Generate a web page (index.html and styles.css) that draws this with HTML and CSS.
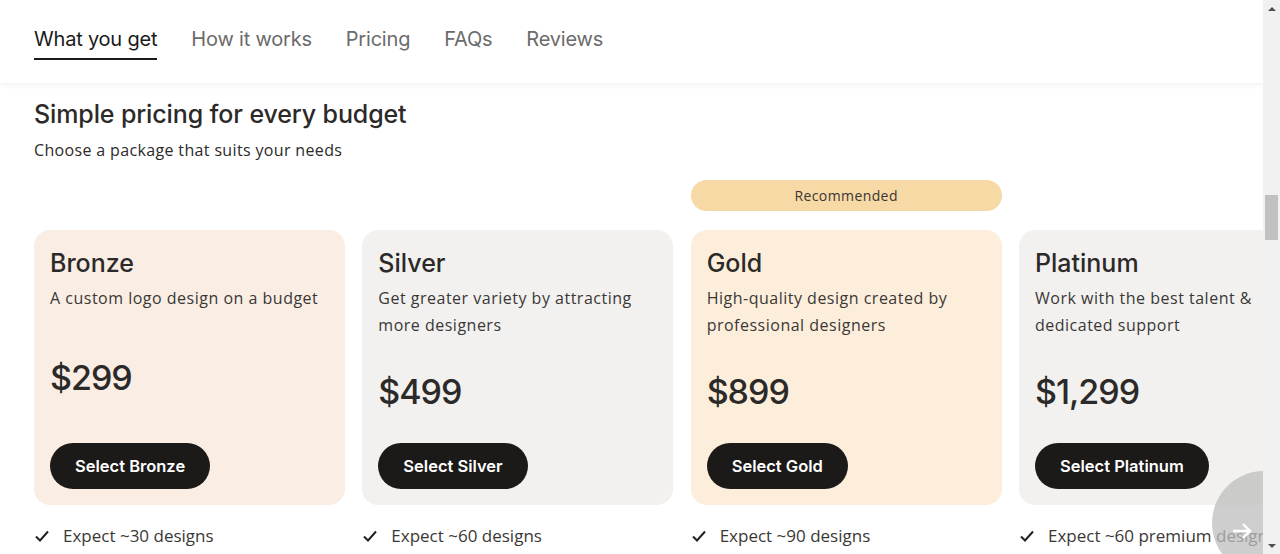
FILE: index.html
```html
<!DOCTYPE html>
<html lang="en">
<head>
<meta charset="utf-8">
<title>Pricing</title>
<link rel="stylesheet" href="styles.css">
</head>
<body>
<div class="page">
  <div class="main">
    <nav class="tabs">
      <a class="tab active">What you get</a>
      <a class="tab">How it works</a>
      <a class="tab">Pricing</a>
      <a class="tab">FAQs</a>
      <a class="tab">Reviews</a>
    </nav>
    <section class="pricing">
      <h2 class="title">Simple pricing for every budget</h2>
      <p class="subtitle">Choose a package that suits your needs</p>
      <div class="plans">
        <div class="plan">
          <div class="badge-slot"></div>
          <div class="card bronze">
            <h3 class="plan-name">Bronze</h3>
            <p class="plan-desc">A custom logo design on a budget</p>
            <div class="price-box"><span class="price">$299</span></div>
            <button class="select">Select Bronze</button>
          </div>
          <ul class="features"><li><svg class="check" viewBox="0 0 16 16"><path d="M2 8.5l4 4 8-9" fill="none" stroke="#222" stroke-width="2"/></svg>Expect ~30 designs</li></ul>
        </div>
        <div class="plan">
          <div class="badge-slot"></div>
          <div class="card silver">
            <h3 class="plan-name">Silver</h3>
            <p class="plan-desc">Get greater variety by attracting more designers</p>
            <div class="price-box"><span class="price">$499</span></div>
            <button class="select">Select Silver</button>
          </div>
          <ul class="features"><li><svg class="check" viewBox="0 0 16 16"><path d="M2 8.5l4 4 8-9" fill="none" stroke="#222" stroke-width="2"/></svg>Expect ~60 designs</li></ul>
        </div>
        <div class="plan">
          <div class="badge-slot"><span class="badge">Recommended</span></div>
          <div class="card gold">
            <h3 class="plan-name">Gold</h3>
            <p class="plan-desc">High-quality design created by professional designers</p>
            <div class="price-box"><span class="price">$899</span></div>
            <button class="select">Select Gold</button>
          </div>
          <ul class="features"><li><svg class="check" viewBox="0 0 16 16"><path d="M2 8.5l4 4 8-9" fill="none" stroke="#222" stroke-width="2"/></svg>Expect ~90 designs</li></ul>
        </div>
        <div class="plan">
          <div class="badge-slot"></div>
          <div class="card silver">
            <h3 class="plan-name">Platinum</h3>
            <p class="plan-desc">Work with the best talent &amp; dedicated support</p>
            <div class="price-box"><span class="price">$1,299</span></div>
            <button class="select">Select Platinum</button>
          </div>
          <ul class="features"><li><svg class="check" viewBox="0 0 16 16"><path d="M2 8.5l4 4 8-9" fill="none" stroke="#222" stroke-width="2"/></svg>Expect ~60 premium designs</li></ul>
        </div>
      </div>
      <button class="next" aria-label="Next"><svg viewBox="0 0 24 24"><path d="M3 12h17M13 5l7 7-7 7" fill="none" stroke="#fff" stroke-width="2.4"/></svg></button>
    </section>
  </div>
  <div class="scrollbar">
    <div class="sb-arrow up"></div>
    <div class="sb-track"><div class="sb-thumb"></div></div>
    <div class="sb-arrow down"></div>
  </div>
</div>
</body>
</html>
```
FILE: styles.css
```css
* { box-sizing: border-box; }
html, body { margin: 0; padding: 0; }
body {
  font-family: "Open Sans", "Noto Sans", sans-serif;
  color: #2b2a29;
  background: #fff;
  overflow: hidden;
}
.page {
  display: flex;
  width: 1280px;
  height: 554px;
}
.main {
  width: 1263px;
  height: 554px;
  overflow: hidden;
  position: relative;
}
.tabs {
  height: 83px;
  display: flex;
  gap: 34px;
  padding: 27px 0 0 34px;
  background: #fff;
  box-shadow: 0 2px 6px rgba(0,0,0,0.06);
  position: relative;
  z-index: 1;
}
.tab {
  font-family: Inter, "Liberation Sans", sans-serif;
  font-size: 20px;
  line-height: 24px;
  letter-spacing: -0.2px;
  color: #6b6b6b;
  height: 33px;
  padding-bottom: 7px;
}
.tab.active {
  color: #1a1a1a;
  border-bottom: 2px solid #1a1a1a;
}
.pricing {
  padding: 14px 0 0 34px;
  position: relative;
  height: 471px;
}
.title {
  margin: 0;
  font-family: Inter, "Open Sans", sans-serif;
  font-size: 25px;
  line-height: 34px;
  font-weight: 500;
  letter-spacing: -0.12px;
  color: #2b2a29;
}
.subtitle {
  margin: 7px 0 0;
  font-size: 16px;
  line-height: 24px;
  letter-spacing: 0.35px;
  color: #2b2a29;
}
.plans {
  display: flex;
  gap: 17.33px;
  margin-top: 18px;
}
.plan {
  flex: 0 0 311px;
  display: flex;
  flex-direction: column;
}
.badge-slot {
  height: 31px;
  margin-bottom: 19px;
}
.badge {
  display: block;
  height: 31px;
  line-height: 31px;
  border-radius: 16px;
  background: #f7d9a6;
  text-align: center;
  font-size: 14px;
  letter-spacing: 0.4px;
  color: #3a3633;
}
.card {
  height: 275px;
  border-radius: 16px;
  padding: 16px 12px 16px 16px;
  display: flex;
  flex-direction: column;
}
.bronze { background: #f9ede4; }
.silver { background: #f2f1ef; }
.gold { background: #fdeedb; }
.plan-name {
  margin: 0;
  font-family: Inter, "Open Sans", sans-serif;
  font-size: 25px;
  line-height: 34px;
  font-weight: 500;
  letter-spacing: 0;
}
.plan-desc {
  margin: 5px 0 0;
  font-size: 16px;
  line-height: 27px;
  letter-spacing: 0.5px;
  color: #3a3836;
}
.price-box {
  flex: 1;
  display: flex;
  align-items: center;
}
.price {
  font-family: Inter, "Open Sans", sans-serif;
  font-size: 34px;
  font-weight: 500;
  letter-spacing: -1px;
  color: #2b2a29;
}
.select {
  align-self: flex-start;
  height: 46px;
  border: none;
  border-radius: 23px;
  background: #1c1a19;
  color: #fff;
  font-family: Inter, "Liberation Sans", sans-serif;
  font-size: 16.5px;
  font-weight: 600;
  letter-spacing: 0;
  padding: 0 25px;
}
.features {
  list-style: none;
  margin: 19px 0 0;
  padding: 0;
}
.features li {
  display: flex;
  align-items: center;
  gap: 13px;
  font-size: 17px;
  line-height: 24px;
  color: #3a3836;
  white-space: nowrap;
}
.check {
  width: 16px;
  height: 16px;
  flex: 0 0 16px;
}
.next {
  position: absolute;
  left: 1212px;
  top: 388px;
  width: 104px;
  height: 104px;
  border-radius: 50%;
  border: none;
  background: rgba(190,190,190,0.75);
  padding: 16px 0 0 18px;
  display: flex;
  align-items: center;
}
.next svg { width: 24px; height: 24px; }
.scrollbar {
  width: 17px;
  height: 554px;
  background: #f1f1f1;
  display: flex;
  flex-direction: column;
}
.sb-arrow {
  height: 17px;
  display: flex;
  align-items: center;
  justify-content: center;
}
.sb-arrow.up::before {
  content: "";
  border-left: 4px solid transparent;
  border-right: 4px solid transparent;
  border-bottom: 4px solid #505050;
}
.sb-arrow.down::before {
  content: "";
  border-left: 4px solid transparent;
  border-right: 4px solid transparent;
  border-top: 4px solid #505050;
}
.sb-track {
  flex: 1;
  padding: 178px 2px 0;
}
.sb-thumb {
  height: 45px;
  background: #c1c1c1;
}
```
